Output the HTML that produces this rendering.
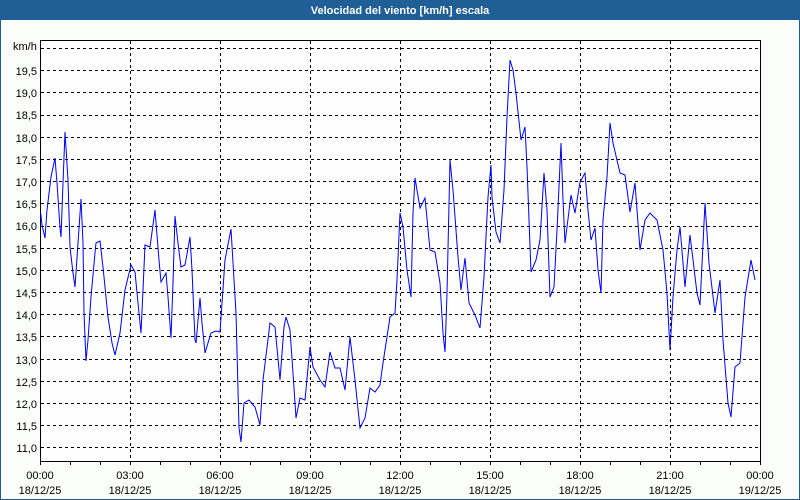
<!DOCTYPE html>
<html><head><style>
html,body{margin:0;padding:0;width:800px;height:500px;overflow:hidden;background:#fbfdfb;}
</style></head><body>
<svg width="800" height="500" xmlns="http://www.w3.org/2000/svg" font-family="Liberation Sans, sans-serif" font-size="11">
<rect x="0.5" y="0.5" width="799" height="499" fill="#fbfdfb" stroke="#1f5f96"/>
<rect x="0" y="0" width="800" height="20" fill="#1f5f96"/>
<text x="400" y="14" fill="#fff" font-weight="bold" text-anchor="middle">Velocidad del viento [km/h] escala</text>
<rect x="40.5" y="40.5" width="720" height="421" fill="#fdfefd" stroke="#000"/>
<g stroke="#000" stroke-dasharray="3,3" stroke-width="1">
<line x1="41" x2="760" y1="48.5" y2="48.5"/><line x1="41" x2="760" y1="70.5" y2="70.5"/><line x1="41" x2="760" y1="92.5" y2="92.5"/><line x1="41" x2="760" y1="115.5" y2="115.5"/><line x1="41" x2="760" y1="137.5" y2="137.5"/><line x1="41" x2="760" y1="159.5" y2="159.5"/><line x1="41" x2="760" y1="181.5" y2="181.5"/><line x1="41" x2="760" y1="203.5" y2="203.5"/><line x1="41" x2="760" y1="226.5" y2="226.5"/><line x1="41" x2="760" y1="248.5" y2="248.5"/><line x1="41" x2="760" y1="270.5" y2="270.5"/><line x1="41" x2="760" y1="292.5" y2="292.5"/><line x1="41" x2="760" y1="314.5" y2="314.5"/><line x1="41" x2="760" y1="336.5" y2="336.5"/><line x1="41" x2="760" y1="359.5" y2="359.5"/><line x1="41" x2="760" y1="381.5" y2="381.5"/><line x1="41" x2="760" y1="403.5" y2="403.5"/><line x1="41" x2="760" y1="425.5" y2="425.5"/><line x1="41" x2="760" y1="447.5" y2="447.5"/>
<line x1="130.5" x2="130.5" y1="41" y2="461"/><line x1="220.5" x2="220.5" y1="41" y2="461"/><line x1="310.5" x2="310.5" y1="41" y2="461"/><line x1="400.5" x2="400.5" y1="41" y2="461"/><line x1="490.5" x2="490.5" y1="41" y2="461"/><line x1="580.5" x2="580.5" y1="41" y2="461"/><line x1="670.5" x2="670.5" y1="41" y2="461"/>
</g>
<g stroke="#000">
<path d="M70.5 461v4M100.5 461v4M130.5 461v4M160.5 461v4M190.5 461v4M220.5 461v4M250.5 461v4M280.5 461v4M310.5 461v4M340.5 461v4M370.5 461v4M400.5 461v4M430.5 461v4M460.5 461v4M490.5 461v4M520.5 461v4M550.5 461v4M580.5 461v4M610.5 461v4M640.5 461v4M670.5 461v4M700.5 461v4M730.5 461v4M760.5 461v4M40.5 461v4"/>
</g>
<polyline fill="none" stroke="#0000ee" stroke-width="1" points="40.7,213 42,225 45,238 47,210 51,177 55,158 57,183 60,228 61,237 63,183 65,132 68,180 70,247 73,273 75,287 78,243 81,199 83,243 84,313 86,361 88,340 91,297 95,253 96,243 100,241 103,267 108,317 112,343 115,355 120,333 125,290 131,265 135,272 138,303 141,333 143,290 145,245 150,247 155,210 159,260 161,282 166,273 168,297 171,338 173,283 175,216 178,243 181,267 185,265 190,237 192,270 195,340 196,343 200,298 202,323 205,353 211,333 216,331 220,332 225,260 231,229 236,313 239,428 241,442 244,403 249,400 255,407 260,425 263,380 270,323 275,327 280,380 284,327 286,317 290,330 293,373 296,418 300,398 305,400 310,347 313,367 320,380 325,387 330,352 335,368 340,368 345,390 350,337 355,380 360,428 365,418 370,388 375,392 380,385 383,363 390,317 395,313 397,280 400,213 403,227 407,270 411,297 413,213 415,178 420,208 425,198 430,250 435,252 440,283 443,333 445,352 447,293 450,160 453,190 458,257 461,290 465,258 469,303 475,315 480,328 484,277 488,197 491,165 492,197 496,232 500,243 504,190 507,117 510,60 513,70 516,93 521,140 525,127 527,167 531,272 536,260 540,240 544,173 547,210 550,297 554,287 557,230 561,143 563,200 565,243 571,195 575,213 580,182 585,173 588,210 591,240 595,228 598,270 601,293 603,220 607,177 610,123 613,143 620,173 625,175 630,212 635,183 640,250 645,220 650,213 657,220 663,250 667,293 670,350 673,297 677,250 680,227 685,287 690,235 697,293 700,305 705,203 709,263 715,313 720,280 723,340 728,403 731,417 735,367 740,363 745,297 751,260 755,280"/>
<g fill="#000" text-anchor="end">
<text x="37" y="75">19,5</text><text x="37" y="97">19,0</text><text x="37" y="119">18,5</text><text x="37" y="142">18,0</text><text x="37" y="164">17,5</text><text x="37" y="186">17,0</text><text x="37" y="208">16,5</text><text x="37" y="230">16,0</text><text x="37" y="253">15,5</text><text x="37" y="275">15,0</text><text x="37" y="297">14,5</text><text x="37" y="319">14,0</text><text x="37" y="341">13,5</text><text x="37" y="364">13,0</text><text x="37" y="386">12,5</text><text x="37" y="408">12,0</text><text x="37" y="430">11,5</text><text x="37" y="452">11,0</text>
</g>
<text x="13" y="50" fill="#000">km/h</text>
<g fill="#000" text-anchor="middle">
<text x="40" y="479">00:00</text><text x="40" y="494">18/12/25</text>
<text x="130" y="479">03:00</text><text x="130" y="494">18/12/25</text>
<text x="220" y="479">06:00</text><text x="220" y="494">18/12/25</text>
<text x="310" y="479">09:00</text><text x="310" y="494">18/12/25</text>
<text x="400" y="479">12:00</text><text x="400" y="494">18/12/25</text>
<text x="490" y="479">15:00</text><text x="490" y="494">18/12/25</text>
<text x="580" y="479">18:00</text><text x="580" y="494">18/12/25</text>
<text x="670" y="479">21:00</text><text x="670" y="494">18/12/25</text>
<text x="760" y="479">00:00</text><text x="760" y="494">19/12/25</text>
</g>
</svg>
</body></html>
